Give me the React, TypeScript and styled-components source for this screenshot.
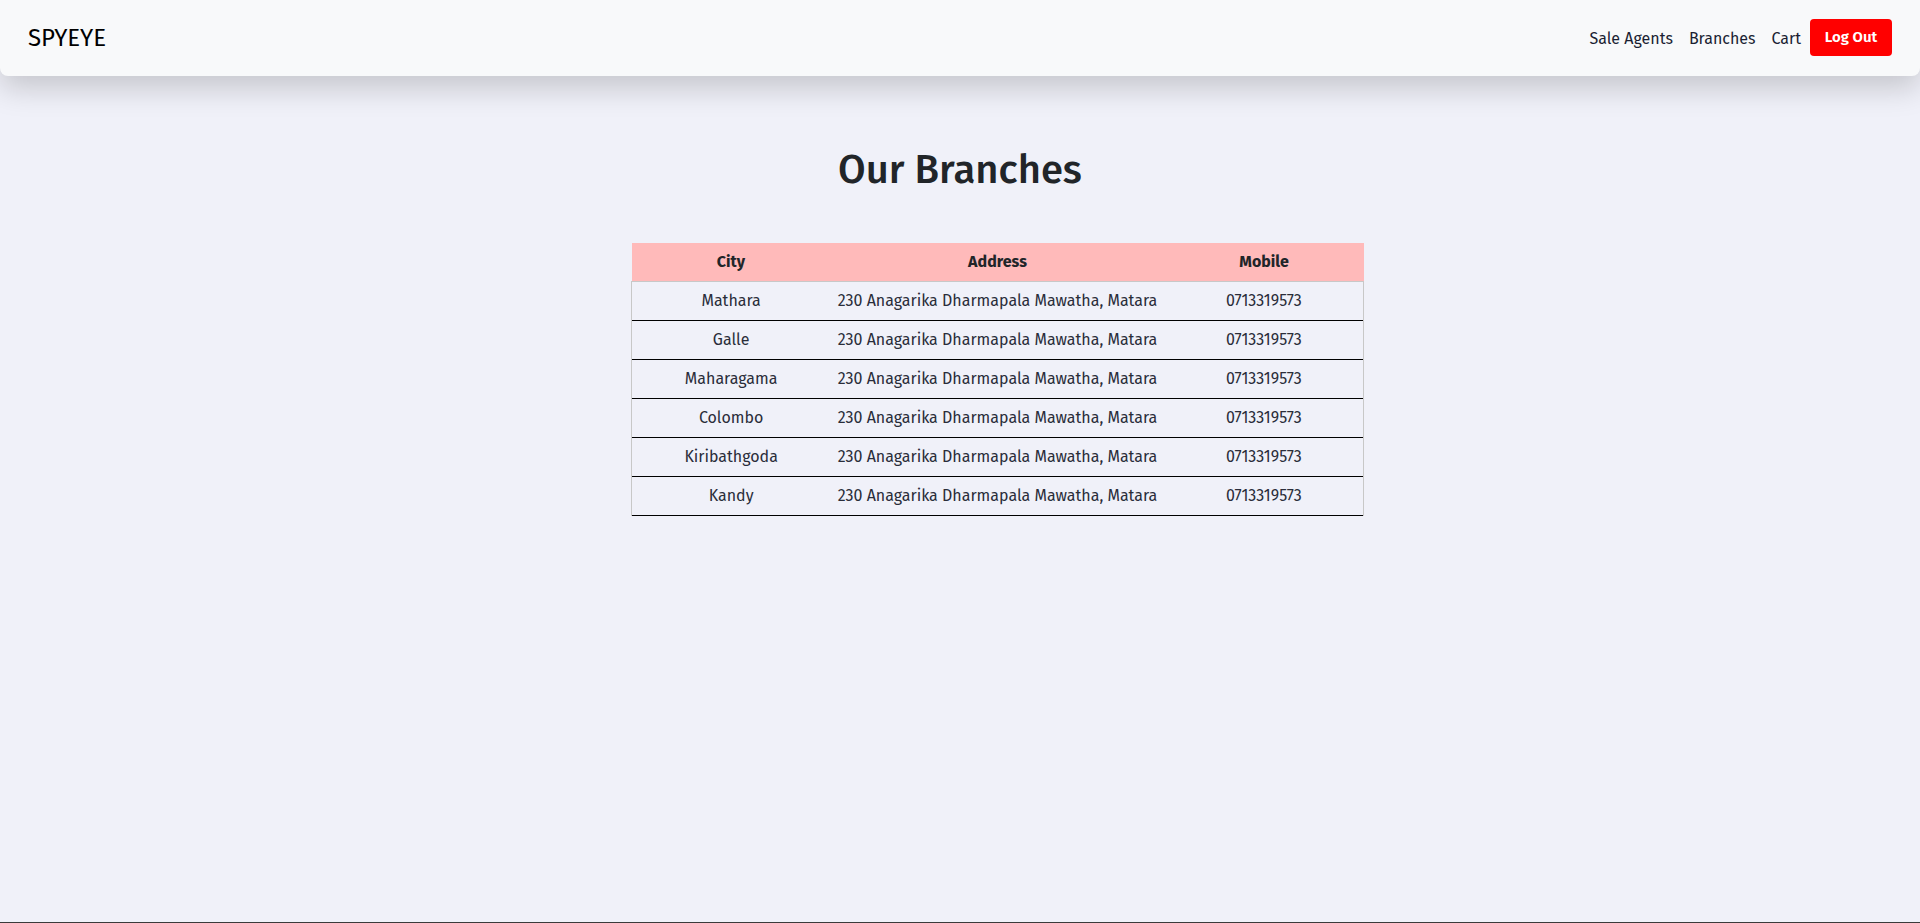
import styled, { createGlobalStyle } from 'styled-components';

const branches = [
  { city: 'Mathara', address: '230 Anagarika Dharmapala Mawatha, Matara', mobile: '0713319573' },
  { city: 'Galle', address: '230 Anagarika Dharmapala Mawatha, Matara', mobile: '0713319573' },
  { city: 'Maharagama', address: '230 Anagarika Dharmapala Mawatha, Matara', mobile: '0713319573' },
  { city: 'Colombo', address: '230 Anagarika Dharmapala Mawatha, Matara', mobile: '0713319573' },
  { city: 'Kiribathgoda', address: '230 Anagarika Dharmapala Mawatha, Matara', mobile: '0713319573' },
  { city: 'Kandy', address: '230 Anagarika Dharmapala Mawatha, Matara', mobile: '0713319573' },
];

const navItems = ['Sale Agents', 'Branches', 'Cart'];

const App = () => {
  return (
    <>
      <GlobalStyle />
      <Page>
        <NavBar>
          <Brand>SPYEYE</Brand>
          <NavList>
            {navItems.map((item) => (
              <NavItem key={item}>{item}</NavItem>
            ))}
            <LogOutButton>Log Out</LogOutButton>
          </NavList>
        </NavBar>

        <Title>Our Branches</Title>

        <TableWrap>
          <BranchTable>
            <thead>
              <tr>
                <HeadCell $width={199}>City</HeadCell>
                <HeadCell $width={335}>Address</HeadCell>
                <HeadCell $width={199}>Mobile</HeadCell>
              </tr>
            </thead>
            <tbody>
              {branches.map((b, i) => (
                <BodyRow key={i}>
                  <BodyCell>{b.city}</BodyCell>
                  <BodyCell>{b.address}</BodyCell>
                  <BodyCell>{b.mobile}</BodyCell>
                </BodyRow>
              ))}
            </tbody>
          </BranchTable>
        </TableWrap>
      </Page>
    </>
  );
};

export default App;

// --- Styled Components ---
const GlobalStyle = createGlobalStyle`
  * { box-sizing: border-box; }
  body {
    margin: 0;
    background: #f0f1f9;
    font-family: "Fira Sans", Roboto, "Liberation Sans", sans-serif;
    color: #212529;
  }
`;

const Page = styled.div`
  min-height: 100vh;
  border-bottom: 1px solid #3a3a3a;
  overflow: hidden;
`;

const NavBar = styled.nav`
  height: 76px;
  display: flex;
  align-items: center;
  justify-content: space-between;
  padding: 0 28px;
  background: #f8f9fa;
  border-radius: 0 0 8px 8px;
  box-shadow: 0 12px 30px rgba(0, 0, 0, 0.18);
`;

const Brand = styled.div`
  font-size: 24px;
  color: #000;
  padding-bottom: 1px;
`;

const NavList = styled.ul`
  display: flex;
  align-items: center;
  list-style: none;
  margin: 0;
  padding: 0;
  font-size: 16px;
`;

const NavItem = styled.li`
  cursor: pointer;
  color: #1b1f33;
  margin-right: 16px;

  &:nth-last-child(2) {
    margin-right: 9px;
  }
`;

const LogOutButton = styled.button`
  width: 82px;
  height: 37px;
  border: none;
  border-radius: 4px;
  background: #ff0000;
  color: #fff;
  font-family: inherit;
  font-size: 15px;
  font-weight: 600;
  cursor: pointer;
  margin-bottom: 2px;
`;

const Title = styled.h1`
  margin: 70px 0 49px;
  text-align: center;
  font-size: 40px;
  font-weight: 500;
  line-height: 48px;
  color: #212529;
`;

const TableWrap = styled.div`
  width: 733px;
  margin-left: calc(50% - 329px);
`;

const BranchTable = styled.table`
  width: 100%;
  border-collapse: collapse;
  font-size: 16px;
`;

const HeadCell = styled.th<{ $width: number }>`
  width: ${({ $width }) => $width}px;
  height: 38px;
  padding: 0;
  background: #ffbaba;
  font-weight: 700;
  color: #212529;
  border-bottom: 1px solid #c8c8c8;
`;

const BodyRow = styled.tr`
  border-bottom: 1px solid #000;

  td:first-child {
    border-left: 1px solid #c8c8c8;
  }
  td:last-child {
    border-right: 1px solid #c8c8c8;
  }
`;

const BodyCell = styled.td`
  height: 39px;
  padding: 0;
  text-align: center;
  color: #2a2d3a;
`;
